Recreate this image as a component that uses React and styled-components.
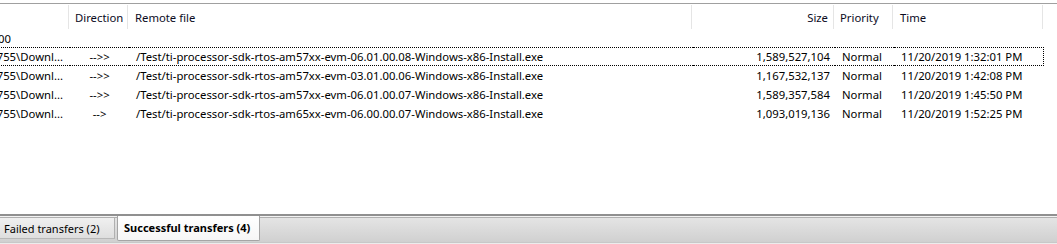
import React from 'react'
import styled, { createGlobalStyle } from 'styled-components'

const GlobalStyle = createGlobalStyle`
  html, body {
    margin: 0;
    padding: 0;
    background: #ffffff;
  }
  body {
    font-family: "Noto Sans", "Open Sans", sans-serif;
    overflow: hidden;
  }
`

// the list is scrolled horizontally, the first column is partly out of view
const SCROLL = 200
const COLS = `${SCROLL + 69}px 59px 564px 142px 59px 150px 1fr`

const Page = styled.div`
  width: 1057px;
  height: 244px;
  display: flex;
  flex-direction: column;
  overflow: hidden;
`

const ListPane = styled.div`
  flex: 1;
  margin-top: 3px;
  border-top: 1px solid #a0a0a0;
  overflow: hidden;
`

const Scroller = styled.div`
  margin-left: -${SCROLL}px;
  width: ${1057 + SCROLL}px;
`

const Header = styled.div`
  display: grid;
  grid-template-columns: ${COLS};
  height: 26px;
  align-items: center;
`

const HeaderCell = styled.div`
  height: 24px;
  display: flex;
  align-items: center;
  justify-content: ${p => (p.$right ? 'flex-end' : 'flex-start')};
  padding: 0 ${p => (p.$right ? '5px' : '0')} 0 ${p => p.$pad || 6}px;
  border-right: 1px solid #e5e5e5;
  font-size: 11.3px;
  color: #0b0b1e;
  white-space: nowrap;
  overflow: hidden;
`

const GroupRow = styled.div`
  height: 17px;
  display: flex;
  align-items: center;
`

const GroupLabel = styled.div`
  width: ${SCROLL + 11}px;
  display: flex;
  justify-content: flex-end;
  font-size: 11.3px;
  color: #000;
  white-space: nowrap;
  overflow: hidden;
`

const Row = styled.div`
  display: grid;
  grid-template-columns: ${COLS};
  height: 19px;
  box-sizing: border-box;
  align-items: center;
  border: 1px solid transparent;
  border-right: 0;
  ${p => p.$focused && `
    & > div:not(:last-child) {
      border-top: 1px dotted #000;
      border-bottom: 1px dotted #000;
    }
    & > div:nth-last-child(2) {
      border-right: 1px dotted #000;
    }
  `}
`

const Cell = styled.div`
  height: 19px;
  box-sizing: border-box;
  margin: -1px 0;
  display: flex;
  align-items: center;
  justify-content: ${p => p.$align || 'flex-start'};
  padding: 0 ${p => p.$pr || 0}px 0 ${p => p.$pl || 0}px;
  font-size: 11.3px;
  color: #000;
  white-space: nowrap;
  overflow: hidden;
`

const TabBar = styled.div`
  height: 30px;
  box-sizing: border-box;
  border-top: 2px solid #909090;
  background: linear-gradient(to bottom, #f4f4f4 0, #f4f4f4 1px, #b0b0b0 1px, #b0b0b0 2px, #e4e4e4 2px, #d0d0d0 26px, #c8c8c8 26px, #c8c8c8 27px, #ececec 27px);
  display: flex;
  align-items: flex-start;
  font-family: "Noto Sans", "Open Sans", sans-serif;
`

const Tab = styled.div`
  box-sizing: border-box;
  display: flex;
  align-items: center;
  white-space: nowrap;
  font-size: 11px;
  color: #000;
  ${p =>
    p.$active
      ? `
    height: 25px;
    margin-left: 2px;
    padding: 0 9px 1px 6px;
    font-weight: 700;
    background: linear-gradient(to bottom, #ffffff, #f6f6f6);
    border: 1px solid #a5a5a5;
    border-top: 0;
    border-radius: 0 0 2px 2px;
  `
      : `
    width: 115px;
    height: 21px;
    margin-top: 2px;
    padding: 0 0 0 4px;
    background: linear-gradient(to bottom, #f0f0f0, #dedede);
    border-right: 1px solid #b0b0b0;
    border-bottom: 1px solid #b8b8b8;
  `}
`

const transfers = [
  { dir: '-->>', file: '/Test/ti-processor-sdk-rtos-am57xx-evm-06.01.00.08-Windows-x86-Install.exe', size: '1,589,527,104', time: '11/20/2019 1:32:01 PM' },
  { dir: '-->>', file: '/Test/ti-processor-sdk-rtos-am57xx-evm-03.01.00.06-Windows-x86-Install.exe', size: '1,167,532,137', time: '11/20/2019 1:42:08 PM' },
  { dir: '-->>', file: '/Test/ti-processor-sdk-rtos-am57xx-evm-06.01.00.07-Windows-x86-Install.exe', size: '1,589,357,584', time: '11/20/2019 1:45:50 PM' },
  { dir: '-->', file: '/Test/ti-processor-sdk-rtos-am65xx-evm-06.00.00.07-Windows-x86-Install.exe', size: '1,093,019,136', time: '11/20/2019 1:52:25 PM' },
]

export default function App() {
  return (
    <Page>
      <GlobalStyle />
      <ListPane>
        <Scroller>
          <Header>
            <HeaderCell>Server/Local file</HeaderCell>
            <HeaderCell>Direction</HeaderCell>
            <HeaderCell $pad={7}>Remote file</HeaderCell>
            <HeaderCell $right>Size</HeaderCell>
            <HeaderCell>Priority</HeaderCell>
            <HeaderCell $pad={7}>Time</HeaderCell>
            <HeaderCell style={{ borderRight: 0 }} />
          </Header>
          <GroupRow>
            <GroupLabel>sftp://user@192.168.1.100</GroupLabel>
          </GroupRow>
          {transfers.map((t, i) => (
            <Row key={i} $focused={i === 0}>
              <Cell $align="flex-end" $pr={7}>C:\Users\user1755\Downl...</Cell>
              <Cell $align="center">{t.dir}</Cell>
              <Cell $pl={7}>{t.file}</Cell>
              <Cell $align="flex-end" $pr={5}>{t.size}</Cell>
              <Cell $pl={7}>Normal</Cell>
              <Cell $pl={7}>{t.time}</Cell>
              <Cell />
            </Row>
          ))}
        </Scroller>
      </ListPane>
      <TabBar>
        <Tab>Failed transfers (2)</Tab>
        <Tab $active>Successful transfers (4)</Tab>
      </TabBar>
    </Page>
  )
}
